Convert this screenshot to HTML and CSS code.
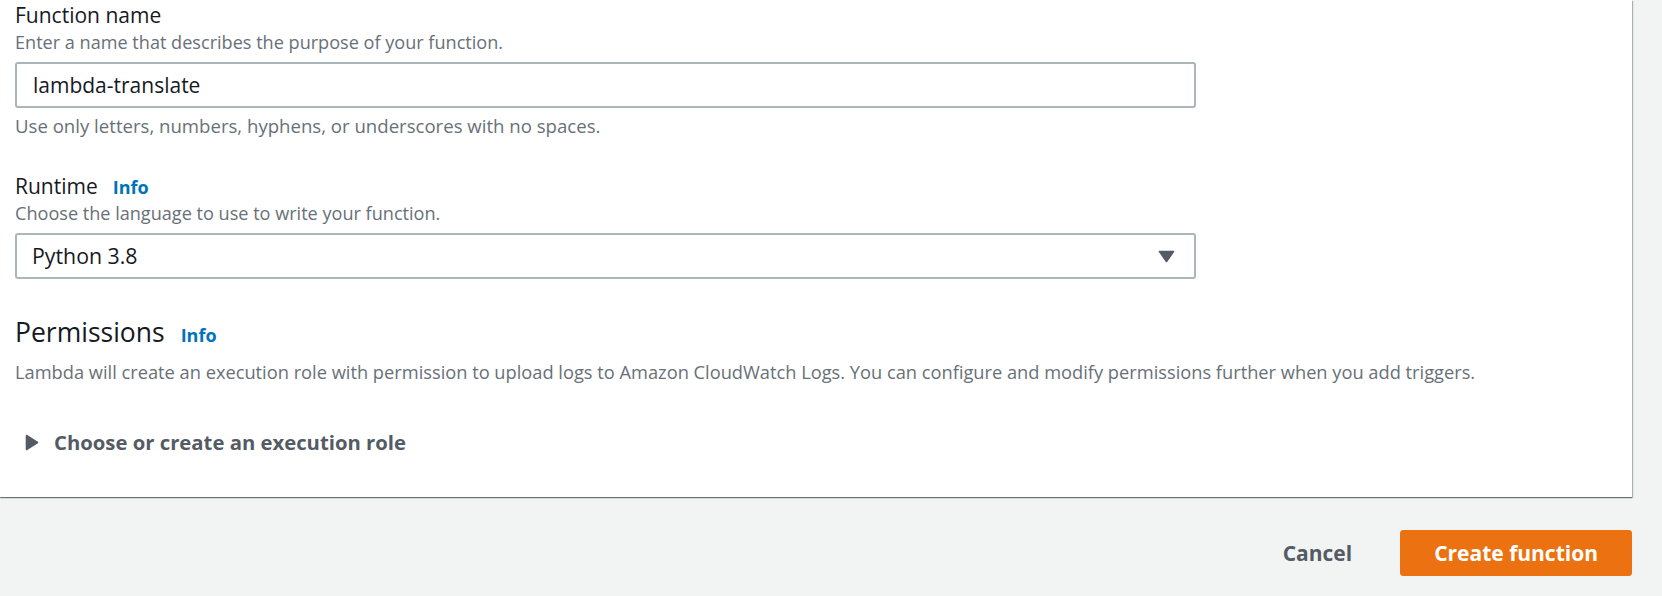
FILE: index.html
```html
<!DOCTYPE html>
<html lang="en">
<head>
<meta charset="utf-8">
<title>Create function</title>
<link rel="stylesheet" href="styles.css">
</head>
<body>
<main class="page">
  <section class="card">
    <div class="field">
      <div class="label-row"><span class="label">Function name</span></div>
      <div class="desc">Enter a name that describes the purpose of your function.</div>
      <div class="input">lambda-translate</div>
      <div class="hint">Use only letters, numbers, hyphens, or underscores with no spaces.</div>
    </div>
    <div class="field field-runtime">
      <div class="label-row"><span class="label">Runtime</span><a class="info">Info</a></div>
      <div class="desc">Choose the language to use to write your function.</div>
      <div class="select">
        <span>Python 3.8</span>
        <svg class="caret" width="17" height="13" viewBox="0 0 17 13"><path d="M1.5 1.5 H15.5 L8.5 11.5 Z" fill="#545b64" stroke="#545b64" stroke-width="1.6" stroke-linejoin="round"/></svg>
      </div>
    </div>
    <div class="permissions">
      <div class="heading-row"><h2 class="heading">Permissions</h2><a class="info">Info</a></div>
      <p class="desc perm-desc">Lambda will create an execution role with permission to upload logs to Amazon CloudWatch Logs. You can configure and modify permissions further when you add triggers.</p>
      <div class="expander">
        <svg class="tri" width="14" height="17" viewBox="0 0 14 17"><path d="M1.5 1.5 L12.5 8.5 L1.5 15.5 Z" fill="#545b64" stroke="#545b64" stroke-width="1.6" stroke-linejoin="round"/></svg>
        <span class="expander-title">Choose or create an execution role</span>
      </div>
    </div>
  </section>
  <div class="actions">
    <button class="btn btn-link">Cancel</button>
    <button class="btn btn-primary">Create function</button>
  </div>
</main>
</body>
</html>
```
FILE: styles.css
```css
html, body {
  margin: 0;
  padding: 0;
}
body {
  background: #f2f3f3;
  font-family: "Open Sans", "Noto Sans", sans-serif;
  color: #16191f;
  width: 1662px;
  height: 596px;
  overflow: hidden;
}
.page {
  width: 1634px;
}
.card {
  box-sizing: border-box;
  width: 1632px;
  height: 497px;
  background: #ffffff;
  padding: 1px 0 0 15px;
  box-shadow: 0 1px 1px 0 rgba(0, 28, 36, 0.45), 1px 1px 1px 0 rgba(0, 28, 36, 0.25);
}
.label-row, .heading-row {
  display: flex;
  align-items: baseline;
  gap: 15px;
}
.label {
  font-size: 21px;
  line-height: 28px;
  color: #16191f;
}
.info {
  font-size: 18px;
  font-weight: 700;
  color: #0073bb;
  text-decoration: none;
}
.desc, .hint {
  font-size: 18.1px;
  line-height: 27px;
  color: #687078;
  margin: 0;
}
.input, .select {
  box-sizing: border-box;
  width: 1181px;
  height: 46px;
  border: 2px solid #aab7b8;
  border-radius: 3px;
  padding: 0 0 0 16px;
  font-size: 21px;
  line-height: 42px;
  color: #16191f;
  margin-top: 6px;
}
.hint {
  margin-top: 4px;
  font-size: 18.6px;
}
.field-runtime {
  margin-top: 33px;
}
.select {
  margin-top: 6px;
  display: flex;
  align-items: center;
  justify-content: space-between;
  padding-right: 19px;
  padding-left: 15px;
  font-size: 21.3px;
}
.caret {
  display: block;
}
.permissions {
  margin-top: 35px;
}
.heading-row {
  gap: 16px;
}
.heading {
  margin: 0;
  font-size: 26.5px;
  line-height: 36px;
  font-weight: 400;
  color: #16191f;
}
.perm-desc {
  margin-top: 8px;
  font-size: 18.25px;
}
.expander {
  margin-top: 43px;
  display: flex;
  align-items: center;
  gap: 15px;
  padding-left: 10px;
  height: 28px;
}
.tri {
  display: block;
}
.expander-title {
  font-size: 20.3px;
  line-height: 28px;
  font-weight: 700;
  color: #545b64;
}
.actions {
  width: 1632px;
  display: flex;
  justify-content: flex-end;
  gap: 14px;
  margin-top: 33px;
}
.btn {
  font-family: "Open Sans", "Noto Sans", sans-serif;
  font-size: 21px;
  font-weight: 700;
  height: 46px;
  padding: 0 33px;
  border-radius: 3px;
  border: 1px solid transparent;
  cursor: pointer;
}
.btn-link {
  background: transparent;
  color: #545b64;
}
.btn-primary {
  background: #ec7211;
  border-color: #ec7211;
  color: #ffffff;
}
```
